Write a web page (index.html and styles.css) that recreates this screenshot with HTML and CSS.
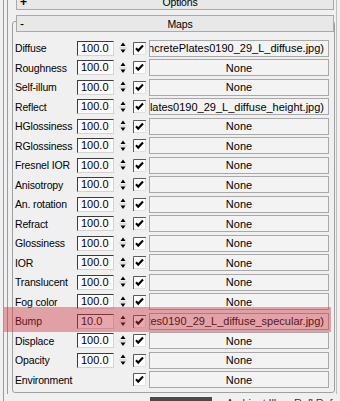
FILE: index.html
```html
<!DOCTYPE html>
<html>
<head>
<meta charset="utf-8">
<link rel="stylesheet" href="styles.css">
</head>
<body>
<div class="screen">
  <div class="rail">
    <div class="rail-inner">
      <div class="bar bar-options"><span class="sign plus">+</span><span class="title">Options</span></div>
      <div class="group">
        <div class="bar bar-maps"><span class="sign">-</span><span class="title">Maps</span></div>
        <div class="rows">
          <div class="row"><span class="lbl">Diffuse</span><span class="num">100.0</span><svg class="spin" viewBox="0 0 8 16"><path d="M4 2.5L6.5 6H1.5Z"/><path d="M1.5 9.5H6.5L4 13Z"/><path class="sep" d="M0 8H8"/></svg><svg class="chk" viewBox="0 0 13 13"><path class="cb-bg" d="M0 0H13V13H0Z"/><path class="cb-dk" d="M0.5 13V0.5H13"/><path class="cb-lt" d="M1 12.5H12.5V1"/><path class="cb-mk" d="M3 6.2L5.2 8.6L10 3.6"/></svg><span class="btn long"><span>Map #2 (ConcretePlates0190_29_L_diffuse.jpg)</span></span></div>
          <div class="row"><span class="lbl">Roughness</span><span class="num">100.0</span><svg class="spin" viewBox="0 0 8 16"><path d="M4 2.5L6.5 6H1.5Z"/><path d="M1.5 9.5H6.5L4 13Z"/><path class="sep" d="M0 8H8"/></svg><svg class="chk" viewBox="0 0 13 13"><path class="cb-bg" d="M0 0H13V13H0Z"/><path class="cb-dk" d="M0.5 13V0.5H13"/><path class="cb-lt" d="M1 12.5H12.5V1"/><path class="cb-mk" d="M3 6.2L5.2 8.6L10 3.6"/></svg><span class="btn"><span>None</span></span></div>
          <div class="row"><span class="lbl">Self-illum</span><span class="num">100.0</span><svg class="spin" viewBox="0 0 8 16"><path d="M4 2.5L6.5 6H1.5Z"/><path d="M1.5 9.5H6.5L4 13Z"/><path class="sep" d="M0 8H8"/></svg><svg class="chk" viewBox="0 0 13 13"><path class="cb-bg" d="M0 0H13V13H0Z"/><path class="cb-dk" d="M0.5 13V0.5H13"/><path class="cb-lt" d="M1 12.5H12.5V1"/><path class="cb-mk" d="M3 6.2L5.2 8.6L10 3.6"/></svg><span class="btn"><span>None</span></span></div>
          <div class="row"><span class="lbl">Reflect</span><span class="num">100.0</span><svg class="spin" viewBox="0 0 8 16"><path d="M4 2.5L6.5 6H1.5Z"/><path d="M1.5 9.5H6.5L4 13Z"/><path class="sep" d="M0 8H8"/></svg><svg class="chk" viewBox="0 0 13 13"><path class="cb-bg" d="M0 0H13V13H0Z"/><path class="cb-dk" d="M0.5 13V0.5H13"/><path class="cb-lt" d="M1 12.5H12.5V1"/><path class="cb-mk" d="M3 6.2L5.2 8.6L10 3.6"/></svg><span class="btn long"><span>Map #3 (ConcretePlates0190_29_L_diffuse_height.jpg)</span></span></div>
          <div class="row"><span class="lbl">HGlossiness</span><span class="num">100.0</span><svg class="spin" viewBox="0 0 8 16"><path d="M4 2.5L6.5 6H1.5Z"/><path d="M1.5 9.5H6.5L4 13Z"/><path class="sep" d="M0 8H8"/></svg><svg class="chk" viewBox="0 0 13 13"><path class="cb-bg" d="M0 0H13V13H0Z"/><path class="cb-dk" d="M0.5 13V0.5H13"/><path class="cb-lt" d="M1 12.5H12.5V1"/><path class="cb-mk" d="M3 6.2L5.2 8.6L10 3.6"/></svg><span class="btn"><span>None</span></span></div>
          <div class="row"><span class="lbl">RGlossiness</span><span class="num">100.0</span><svg class="spin" viewBox="0 0 8 16"><path d="M4 2.5L6.5 6H1.5Z"/><path d="M1.5 9.5H6.5L4 13Z"/><path class="sep" d="M0 8H8"/></svg><svg class="chk" viewBox="0 0 13 13"><path class="cb-bg" d="M0 0H13V13H0Z"/><path class="cb-dk" d="M0.5 13V0.5H13"/><path class="cb-lt" d="M1 12.5H12.5V1"/><path class="cb-mk" d="M3 6.2L5.2 8.6L10 3.6"/></svg><span class="btn"><span>None</span></span></div>
          <div class="row"><span class="lbl">Fresnel IOR</span><span class="num">100.0</span><svg class="spin" viewBox="0 0 8 16"><path d="M4 2.5L6.5 6H1.5Z"/><path d="M1.5 9.5H6.5L4 13Z"/><path class="sep" d="M0 8H8"/></svg><svg class="chk" viewBox="0 0 13 13"><path class="cb-bg" d="M0 0H13V13H0Z"/><path class="cb-dk" d="M0.5 13V0.5H13"/><path class="cb-lt" d="M1 12.5H12.5V1"/><path class="cb-mk" d="M3 6.2L5.2 8.6L10 3.6"/></svg><span class="btn"><span>None</span></span></div>
          <div class="row"><span class="lbl">Anisotropy</span><span class="num">100.0</span><svg class="spin" viewBox="0 0 8 16"><path d="M4 2.5L6.5 6H1.5Z"/><path d="M1.5 9.5H6.5L4 13Z"/><path class="sep" d="M0 8H8"/></svg><svg class="chk" viewBox="0 0 13 13"><path class="cb-bg" d="M0 0H13V13H0Z"/><path class="cb-dk" d="M0.5 13V0.5H13"/><path class="cb-lt" d="M1 12.5H12.5V1"/><path class="cb-mk" d="M3 6.2L5.2 8.6L10 3.6"/></svg><span class="btn"><span>None</span></span></div>
          <div class="row"><span class="lbl">An. rotation</span><span class="num">100.0</span><svg class="spin" viewBox="0 0 8 16"><path d="M4 2.5L6.5 6H1.5Z"/><path d="M1.5 9.5H6.5L4 13Z"/><path class="sep" d="M0 8H8"/></svg><svg class="chk" viewBox="0 0 13 13"><path class="cb-bg" d="M0 0H13V13H0Z"/><path class="cb-dk" d="M0.5 13V0.5H13"/><path class="cb-lt" d="M1 12.5H12.5V1"/><path class="cb-mk" d="M3 6.2L5.2 8.6L10 3.6"/></svg><span class="btn"><span>None</span></span></div>
          <div class="row"><span class="lbl">Refract</span><span class="num">100.0</span><svg class="spin" viewBox="0 0 8 16"><path d="M4 2.5L6.5 6H1.5Z"/><path d="M1.5 9.5H6.5L4 13Z"/><path class="sep" d="M0 8H8"/></svg><svg class="chk" viewBox="0 0 13 13"><path class="cb-bg" d="M0 0H13V13H0Z"/><path class="cb-dk" d="M0.5 13V0.5H13"/><path class="cb-lt" d="M1 12.5H12.5V1"/><path class="cb-mk" d="M3 6.2L5.2 8.6L10 3.6"/></svg><span class="btn"><span>None</span></span></div>
          <div class="row"><span class="lbl">Glossiness</span><span class="num">100.0</span><svg class="spin" viewBox="0 0 8 16"><path d="M4 2.5L6.5 6H1.5Z"/><path d="M1.5 9.5H6.5L4 13Z"/><path class="sep" d="M0 8H8"/></svg><svg class="chk" viewBox="0 0 13 13"><path class="cb-bg" d="M0 0H13V13H0Z"/><path class="cb-dk" d="M0.5 13V0.5H13"/><path class="cb-lt" d="M1 12.5H12.5V1"/><path class="cb-mk" d="M3 6.2L5.2 8.6L10 3.6"/></svg><span class="btn"><span>None</span></span></div>
          <div class="row"><span class="lbl">IOR</span><span class="num">100.0</span><svg class="spin" viewBox="0 0 8 16"><path d="M4 2.5L6.5 6H1.5Z"/><path d="M1.5 9.5H6.5L4 13Z"/><path class="sep" d="M0 8H8"/></svg><svg class="chk" viewBox="0 0 13 13"><path class="cb-bg" d="M0 0H13V13H0Z"/><path class="cb-dk" d="M0.5 13V0.5H13"/><path class="cb-lt" d="M1 12.5H12.5V1"/><path class="cb-mk" d="M3 6.2L5.2 8.6L10 3.6"/></svg><span class="btn"><span>None</span></span></div>
          <div class="row"><span class="lbl">Translucent</span><span class="num">100.0</span><svg class="spin" viewBox="0 0 8 16"><path d="M4 2.5L6.5 6H1.5Z"/><path d="M1.5 9.5H6.5L4 13Z"/><path class="sep" d="M0 8H8"/></svg><svg class="chk" viewBox="0 0 13 13"><path class="cb-bg" d="M0 0H13V13H0Z"/><path class="cb-dk" d="M0.5 13V0.5H13"/><path class="cb-lt" d="M1 12.5H12.5V1"/><path class="cb-mk" d="M3 6.2L5.2 8.6L10 3.6"/></svg><span class="btn"><span>None</span></span></div>
          <div class="row"><span class="lbl">Fog color</span><span class="num">100.0</span><svg class="spin" viewBox="0 0 8 16"><path d="M4 2.5L6.5 6H1.5Z"/><path d="M1.5 9.5H6.5L4 13Z"/><path class="sep" d="M0 8H8"/></svg><svg class="chk" viewBox="0 0 13 13"><path class="cb-bg" d="M0 0H13V13H0Z"/><path class="cb-dk" d="M0.5 13V0.5H13"/><path class="cb-lt" d="M1 12.5H12.5V1"/><path class="cb-mk" d="M3 6.2L5.2 8.6L10 3.6"/></svg><span class="btn"><span>None</span></span></div>
          <div class="row"><span class="lbl">Bump</span><span class="num">10.0</span><svg class="spin" viewBox="0 0 8 16"><path d="M4 2.5L6.5 6H1.5Z"/><path d="M1.5 9.5H6.5L4 13Z"/><path class="sep" d="M0 8H8"/></svg><svg class="chk" viewBox="0 0 13 13"><path class="cb-bg" d="M0 0H13V13H0Z"/><path class="cb-dk" d="M0.5 13V0.5H13"/><path class="cb-lt" d="M1 12.5H12.5V1"/><path class="cb-mk" d="M3 6.2L5.2 8.6L10 3.6"/></svg><span class="btn long"><span>Map #4 (ConcretePlates0190_29_L_diffuse_specular.jpg)</span></span></div>
          <div class="row"><span class="lbl">Displace</span><span class="num">100.0</span><svg class="spin" viewBox="0 0 8 16"><path d="M4 2.5L6.5 6H1.5Z"/><path d="M1.5 9.5H6.5L4 13Z"/><path class="sep" d="M0 8H8"/></svg><svg class="chk" viewBox="0 0 13 13"><path class="cb-bg" d="M0 0H13V13H0Z"/><path class="cb-dk" d="M0.5 13V0.5H13"/><path class="cb-lt" d="M1 12.5H12.5V1"/><path class="cb-mk" d="M3 6.2L5.2 8.6L10 3.6"/></svg><span class="btn"><span>None</span></span></div>
          <div class="row"><span class="lbl">Opacity</span><span class="num">100.0</span><svg class="spin" viewBox="0 0 8 16"><path d="M4 2.5L6.5 6H1.5Z"/><path d="M1.5 9.5H6.5L4 13Z"/><path class="sep" d="M0 8H8"/></svg><svg class="chk" viewBox="0 0 13 13"><path class="cb-bg" d="M0 0H13V13H0Z"/><path class="cb-dk" d="M0.5 13V0.5H13"/><path class="cb-lt" d="M1 12.5H12.5V1"/><path class="cb-mk" d="M3 6.2L5.2 8.6L10 3.6"/></svg><span class="btn"><span>None</span></span></div>
          <div class="row"><span class="lbl lbl-wide">Environment</span><svg class="chk" viewBox="0 0 13 13"><path class="cb-bg" d="M0 0H13V13H0Z"/><path class="cb-dk" d="M0.5 13V0.5H13"/><path class="cb-lt" d="M1 12.5H12.5V1"/><path class="cb-mk" d="M3 6.2L5.2 8.6L10 3.6"/></svg><span class="btn"><span>None</span></span></div>
        </div>
        <div class="hl"></div>
      </div>
      <div class="footer"><span class="fbox"></span><span class="ftext">Ambient Illum Refl Refr</span></div>
    </div>
  </div>
</div>
</body>
</html>
```

FILE: styles.css
```css
html, body {
  margin: 0;
  padding: 0;
  background: #f0f0f0;
}
.screen {
  width: 340px;
  height: 401px;
  overflow: hidden;
  position: relative;
  display: flex;
  font-family: "Liberation Sans", Arial, sans-serif;
  font-size: 10.5px;
  letter-spacing: -0.15px;
  color: #000;
}
.rail {
  margin-left: 3px;
  padding-left: 3px;
  border-left: 1px solid #9a9a9a;
  width: 330px;
  flex: none;
}
.rail-inner {
  border-left: 1px solid #9a9a9a;
  border-right: 1px solid #bdbdbd;
  height: 401px;
}
.bar {
  box-sizing: border-box;
  height: 17px;
  width: 318px;
  border: 1px solid #a9a9a9;
  background: #e8e8e8;
  display: flex;
  align-items: center;
  position: relative;
}
.bar .sign {
  position: absolute;
  left: 3px;
  font-size: 12px;
}
.bar .plus {
  font-weight: bold;
}
.bar .title {
  flex: 1;
  text-align: center;
  padding-left: 10px;
}
.bar-options {
  margin-top: -7px;
  margin-left: 8px;
}
.group {
  position: relative;
  margin-top: 11px;
  margin-left: 4px;
  width: 323px;
  box-sizing: border-box;
  border: 1px solid #a0a0a0;
  border-radius: 3px;
  padding-bottom: 2px;
}
.bar-maps {
  margin-top: -7px;
  margin-left: 3px;
}
.rows {
  padding-top: 6.5px;
  padding-left: 2px;
}
.row {
  height: 19.5px;
  display: flex;
  align-items: center;
}
.lbl {
  width: 62px;
  flex: none;
  white-space: nowrap;
}
.lbl-wide {
  width: 118px;
}
.num {
  box-sizing: border-box;
  flex: none;
  width: 37px;
  height: 15px;
  line-height: 13px;
  padding-left: 3px;
  font-size: 11px;
  letter-spacing: 0;
  background: #fbfbfb;
  border-top: 1px solid #3c3c3c;
  border-left: 1px solid #3c3c3c;
  border-right: 1px solid #d4d4d4;
  border-bottom: 1px solid #d4d4d4;
  margin-right: 5px;
}
.spin {
  flex: none;
  width: 8px;
  height: 16px;
  margin-right: 6px;
  fill: #000;
}
.spin .sep {
  stroke: #d0d0d0;
  stroke-width: 1;
  fill: none;
}
.chk {
  flex: none;
  width: 13px;
  height: 13px;
  margin-right: 3px;
}
.cb-bg { fill: #ffffff; }
.cb-dk { fill: none; stroke: #5a5a5a; stroke-width: 1; }
.cb-lt { fill: none; stroke: #e0e0e0; stroke-width: 1; }
.cb-mk { fill: none; stroke: #000; stroke-width: 2.1; }
.btn {
  box-sizing: border-box;
  flex: none;
  width: 180px;
  height: 17px;
  border: 1px solid #a8a8a8;
  background: #f3f3f3;
  display: flex;
  align-items: center;
  justify-content: center;
  overflow: hidden;
  white-space: nowrap;
  font-size: 11px;
  letter-spacing: 0;
}
.btn.long {
  justify-content: flex-end;
  padding-right: 4px;
}
.btn span {
  flex: none;
}
.hl {
  position: absolute;
  left: -9px;
  width: 327px;
  top: 285px;
  height: 25px;
  background: rgba(205, 50, 65, 0.42);
}
.footer {
  height: 20px;
  display: flex;
  align-items: flex-start;
  padding-top: 4px;
  padding-left: 142px;
}
.fbox {
  width: 67px;
  height: 8px;
  background: #4a4a4a;
  margin-right: 14px;
}
.ftext {
  color: #333;
  white-space: nowrap;
  font-size: 11px;
  line-height: 11px;
  margin-top: 1px;
}
```
